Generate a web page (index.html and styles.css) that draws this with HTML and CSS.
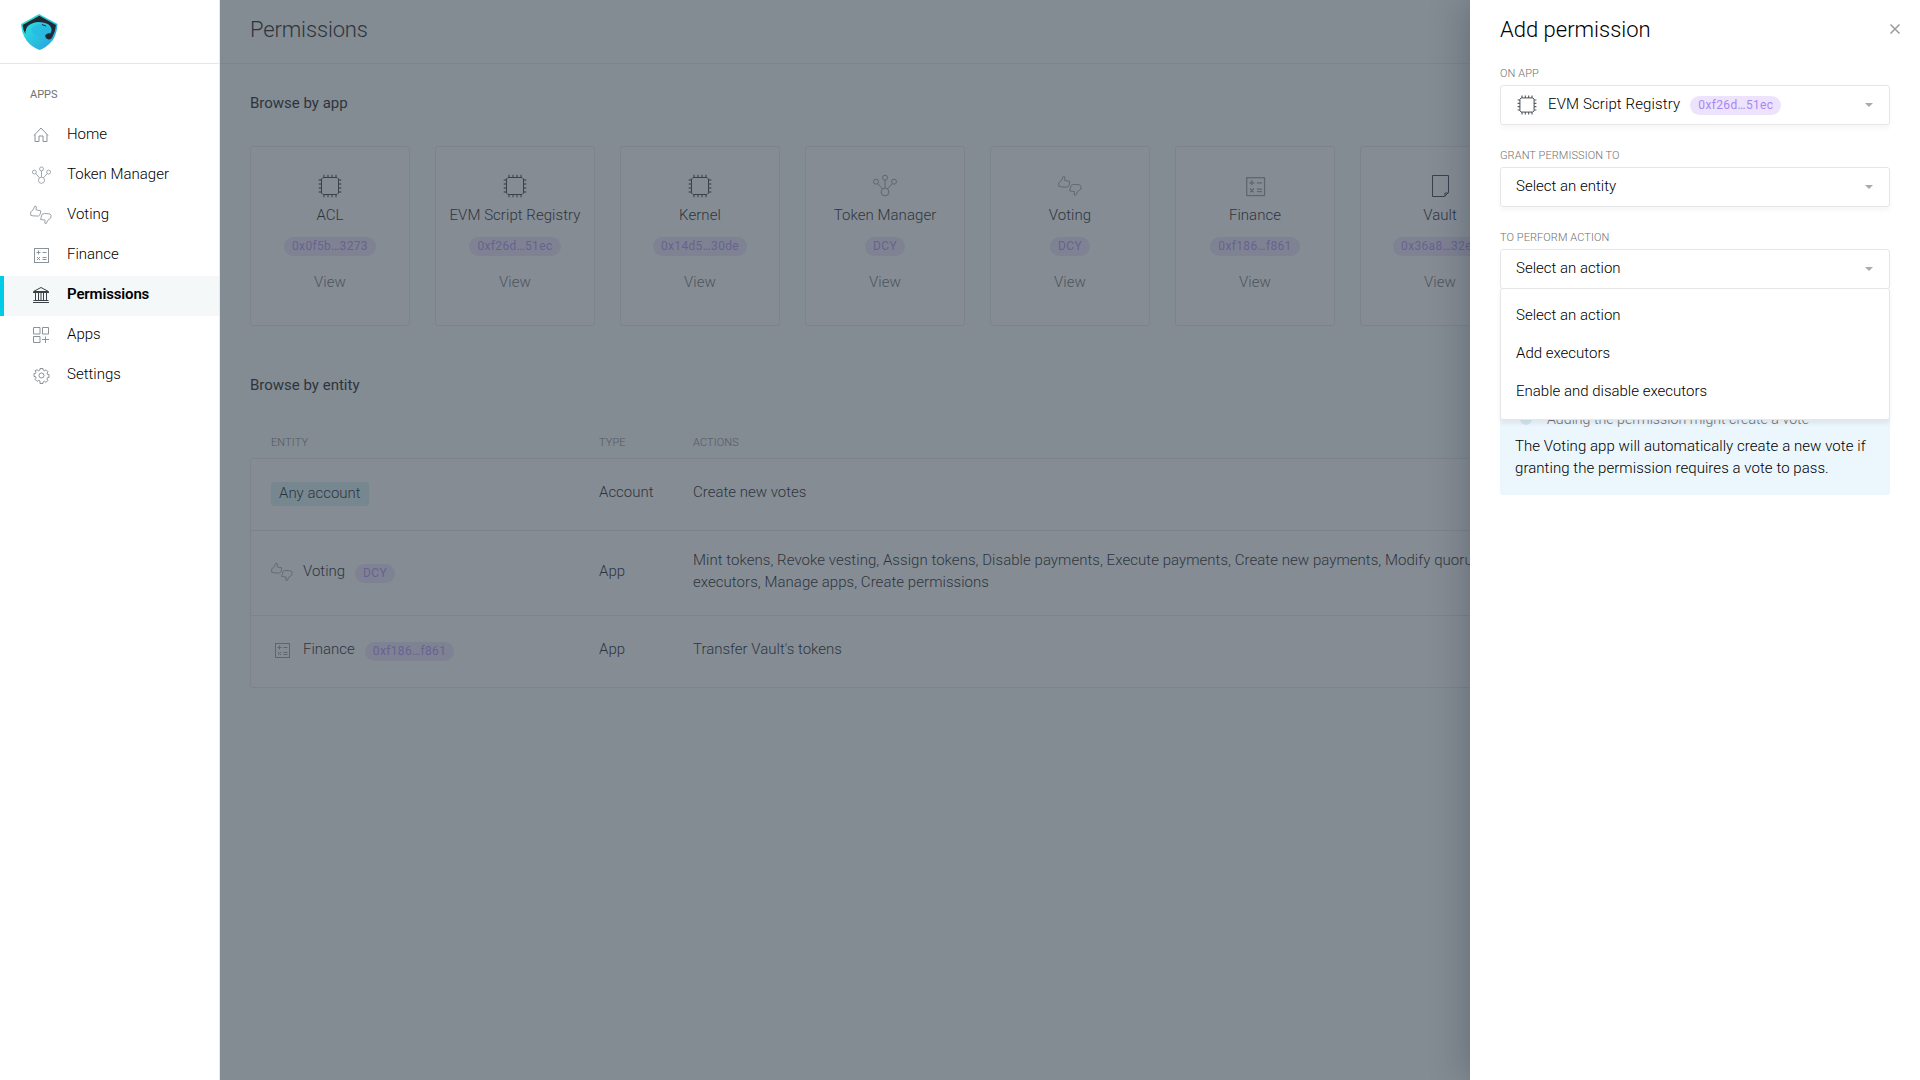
FILE: index.html
```
<!DOCTYPE html>
<html lang="en">
<head>
<meta charset="utf-8">
<title>Permissions</title>
<link rel="stylesheet" href="styles.css">
</head>
<body>
<svg width="0" height="0" class="defs" aria-hidden="true">
  <defs>
    <linearGradient id="shield" x1="0" y1="0" x2="1" y2="1"><stop offset="0" stop-color="#2deee0"/><stop offset="1" stop-color="#259bdf"/></linearGradient>
    <symbol id="i-home" viewBox="0 0 22 22"><path d="M4 11.500 11 4l7 7.500M5 10.500v7h4v-5.500h4v5.500h4v-7" /></symbol>
    <symbol id="i-token" viewBox="0 0 24 24"><circle cx="12" cy="18" r="3.900"/><circle cx="3" cy="7.700" r="2.500"/><circle cx="12" cy="3.700" r="2.500"/><circle cx="21" cy="7.700" r="2.500"/><path d="M12 6.200v7.900M4.700 9.600l4.800 5.300M19.300 9.600l-4.800 5.300"/></symbol>
    <symbol id="i-vote" viewBox="-.5 0 26 24"><path d="M.3 8.300 3 6.200 5.300 1.500l1.700.7-.3 3.700 5.600 1.200-1 4.600-2 1.600-6.300-.3-2.700-.7zM12 17.300 13.700 11.300l2.600-1.100 6.700.5 1.400 1.600-.4 3.400-3.300 2.300-2 4-1.700-.3.300-3.700z"/></symbol>
    <symbol id="i-finance" viewBox="0 0 22 22"><rect x="4.500" y="4.500" width="14" height="14"/><path d="M6.500 8.500h4M8.500 6.500v4M12.500 8.500h4M12.500 13.500h4M12.500 15.500h4M7 13l3 3M10 13l-3 3"/></symbol>
    <symbol id="i-perm" viewBox="0 0 22 22"><path d="M3.500 7.500 11 3.500l7.500 4zM3 8.500h16M3.500 16.500h15M3 18.500h16M5.500 9v7M8.500 9v7M11 9v7M13.500 9v7M16.500 9v7"/></symbol>
    <symbol id="i-apps" viewBox="0 0 22 22"><path d="M3.500 3.500h6.500v6.500h-6.500zM12.500 3.500h6v6.500h-6zM3.500 12.500h6.500v6h-6.500zM15.500 12.500v6.500M12 15.500h7"/></symbol>
    <symbol id="i-gear" viewBox="0 0 22 22"><circle cx="11.500" cy="11.500" r="2.500"/><path d="M10 6V4.500h3V6l1.800.8 1.200-1.100 2.100 2.100-1.100 1.200.6 1.500H19v3h-1.400l-.7 1.600 1.100 1.200-2.100 2.100-1.200-1.100-1.700.7v1.500h-3V17l-1.700-.7-1.200 1.100L5 15.300l1.100-1.200-.7-1.600H4v-3h1.400l.7-1.500L5 6.800l2.100-1.100 1.200 1.100z"/></symbol>
    <symbol id="i-chip" viewBox="0 0 24 24"><path class="pins" d="M6 .7v2.600M10 .7v2.600M14 .7v2.600M18 .7v2.600M6 20.700v2.600M10 20.700v2.600M14 20.700v2.600M18 20.700v2.600M.7 6h2.600M.7 10h2.600M.7 14h2.600M.7 18h2.600M20.700 6h2.600M20.700 10h2.600M20.700 14h2.600M20.700 18h2.600"/><path d="M5 3.500h14l1.500 1.500v14l-1.500 1.500H5L3.500 19V5z"/></symbol>
    <symbol id="i-doc" viewBox="0 0 24 24"><path d="M4.500 1.500h16v17l-4 4h-12zM17 22.500v-3.500h3.500"/></symbol>
  </defs>
</svg>
<div class="app">
  <aside class="sidebar">
    <div class="brand">
      <svg width="38" height="38" viewBox="0 0 38 38"><path d="M19 1 37.500 11 Q37 21 32.500 27.500 26 35 19.500 37 12 34.500 6.500 27.500 1.500 20 1 11z" fill="url(#shield)"/><path d="M2.500 12 19.300 2.800 36 12Q35.500 18 33 22.500 31.500 26.800 28.500 26.500 25 25.500 25.200 22 27 19.500 30 20.500 32.500 18 31 14.500 29.500 10.500 23 9.500 15 7.500 8.500 12.500 5 16 5.500 21 3 17 2.500 12z" fill="#222a31"/><ellipse cx="20.500" cy="17" rx="9" ry="6" fill="#27b8e3" opacity=".7"/><path d="M22 11.500l4 1.500" stroke="#222a31"/></svg>
    </div>
    <h2 class="eyebrow">APPS</h2>
    <nav>
      <a class="nav"><svg class="ic"><use href="#i-home"/></svg><span>Home</span></a>
      <a class="nav"><svg class="ic small"><use href="#i-token"/></svg><span>Token Manager</span></a>
      <a class="nav"><svg class="ic"><use href="#i-vote"/></svg><span>Voting</span></a>
      <a class="nav"><svg class="ic"><use href="#i-finance"/></svg><span>Finance</span></a>
      <a class="nav active"><svg class="ic"><use href="#i-perm"/></svg><span>Permissions</span></a>
      <a class="nav"><svg class="ic"><use href="#i-apps"/></svg><span>Apps</span></a>
      <a class="nav"><svg class="ic"><use href="#i-gear"/></svg><span>Settings</span></a>
    </nav>
  </aside>
  <main class="main">
    <header class="top">Permissions</header>
    <div class="content">
      <h2 class="section">Browse by app</h2>
      <div class="cards">
        <div class="card"><svg class="ic dark"><use href="#i-chip"/></svg><b>ACL</b><span class="badge">0x0f5b…3273</span><i>View</i></div>
        <div class="card"><svg class="ic dark"><use href="#i-chip"/></svg><b>EVM Script Registry</b><span class="badge">0xf26d…51ec</span><i>View</i></div>
        <div class="card"><svg class="ic dark"><use href="#i-chip"/></svg><b>Kernel</b><span class="badge">0x14d5…30de</span><i>View</i></div>
        <div class="card"><svg class="ic"><use href="#i-token"/></svg><b>Token Manager</b><span class="badge">DCY</span><i>View</i></div>
        <div class="card"><svg class="ic"><use href="#i-vote"/></svg><b>Voting</b><span class="badge">DCY</span><i>View</i></div>
        <div class="card"><svg class="ic wide"><use href="#i-finance"/></svg><b>Finance</b><span class="badge">0xf186…f861</span><i>View</i></div>
        <div class="card"><svg class="ic dark"><use href="#i-doc"/></svg><b>Vault</b><span class="badge">0x36a8…32e6</span><i>View</i></div>
      </div>
      <h2 class="section second">Browse by entity</h2>
      <div class="row head"><span>ENTITY</span><span>TYPE</span><span>ACTIONS</span></div>
      <div class="table">
        <div class="row short"><span><em class="tag">Any account</em></span><span>Account</span><span>Create new votes</span></div>
        <div class="row tall"><span class="entity"><svg class="ic"><use href="#i-vote"/></svg>Voting<span class="badge">DCY</span></span><span>App</span><span class="actions">Mint tokens, Revoke vesting, Assign tokens, Disable payments, Execute payments, Create new payments, Modify quorum,<br>executors, Manage apps, Create permissions</span></div>
        <div class="row short"><span class="entity"><svg class="ic"><use href="#i-finance"/></svg>Finance<span class="badge">0xf186…f861</span></span><span>App</span><span>Transfer Vault's tokens</span></div>
      </div>
    </div>
    <div class="overlay"></div>
  </main>
  <aside class="panel">
    <header class="panel-top"><h1>Add permission</h1><svg class="close" width="12" height="12"><path d="M1.500 1.500l9 9M10.500 1.500l-9 9"/></svg></header>
    <div class="field"><label>ON APP</label><div class="select"><svg class="ic dark"><use href="#i-chip"/></svg><span class="value app-name">EVM Script Registry</span><span class="badge">0xf26d…51ec</span><svg class="arrow" width="8" height="4"><path d="M0 0h8L4 4z"/></svg></div></div>
    <div class="field"><label>GRANT PERMISSION TO</label><div class="select"><span class="value">Select an entity</span><svg class="arrow" width="8" height="4"><path d="M0 0h8L4 4z"/></svg></div></div>
    <div class="field"><label>TO PERFORM ACTION</label><div class="select"><span class="value">Select an action</span><svg class="arrow" width="8" height="4"><path d="M0 0h8L4 4z"/></svg>
      <div class="menu"><div>Select an action</div><div>Add executors</div><div>Enable and disable executors</div></div></div></div>
    <div class="info"><div class="info-title"><span class="dot"></span>Adding the permission might create a vote</div><p>The Voting app will automatically create a new vote if<br>granting the permission requires a vote to pass.</p></div>
  </aside>
</div>
</body>
</html>
```
FILE: styles.css
```
* { box-sizing: border-box; }
body { margin: 0; background: #fff; font: 300 15px/22px Roboto, sans-serif; color: #000; overflow: hidden; }
h1, h2, p { margin: 0; font-weight: inherit; font-size: inherit; }
b, i, em { font-weight: inherit; font-style: normal; }
.defs { position: absolute; }
.app { display: flex; width: 1920px; height: 1080px; }
.ic { width: 22px; height: 22px; flex: none; fill: none; stroke: #8a9399; stroke-width: 1; }
.ic.dark { stroke: #222b33; }
.pins { stroke-width: 1.4; opacity: .75; }

.sidebar { width: 220px; flex: none; border-right: 1px solid #e8e8e8; }
.brand { height: 64px; border-bottom: 1px solid #e6e6e6; padding: 13px 20px; }
.brand svg { display: block; }
.eyebrow { padding: 20px 30px 0; height: 52px; font-size: 11px; line-height: 22px; color: #707070; font-weight: 400; }
.nav { display: flex; align-items: center; height: 40px; padding: 0 0 2px 30px; gap: 15px; }
.nav span { padding-bottom: 2px; }
.nav .ic.small { width: 19px; height: 19px; margin: 0 1px 0 2px; }
.nav.active { background: #f5f8f9; box-shadow: inset 4px 0 #00cbe6; font-weight: 600; letter-spacing: -.15px; }
.nav.active .ic { stroke: #3a4247; }

.main { flex: none; width: 1250px; overflow: hidden; position: relative; background: #f9fbfd; }
.overlay { position: absolute; inset: 0; background: rgba(68, 79, 90, .65); }
.top { height: 64px; border-bottom: 1px solid #e8e8e8; padding: 14px 30px; font-size: 22px; line-height: 32px; letter-spacing: -.15px; }
.content { padding: 28px 30px; width: 1700px; }
.section { font-weight: 400; line-height: 22px; }
.cards { display: flex; gap: 25px; margin-top: 32px; }
.card { width: 160px; height: 180px; border: 1px solid #e6e6e6; border-radius: 3px; background: #fff; display: flex; flex-direction: column; align-items: center; padding-top: 27px; }
.card .ic { width: 24px; height: 24px; }
.card .ic.wide { width: 28px; height: 28px; margin: -2px 0; }
.card b { margin-top: 6px; letter-spacing: .05px; }
.card .badge { margin: 11px 0 15px; }
.card i { color: #606060; letter-spacing: .1px; }
.badge { display: inline-block; height: 19px; border-radius: 10px; padding: 0 8px; font-size: 12px; line-height: 19px; letter-spacing: .35px; color: #a987f3; background: #ede3fc; font-weight: 400; }
.second { margin-top: 48px; }
.row { display: grid; grid-template-columns: 328px 94px 1fr; padding-left: 20px; align-items: center; }
.head { height: 62px; padding: 31px 0 0 21px; font-size: 11px; letter-spacing: .1px; color: #707070; }
.table { border: 1px solid #e6e6e6; border-radius: 3px; background: #fff; }
.short { height: 71px; padding-bottom: 5px; }
.tall { height: 86px; padding-bottom: 4px; border-top: 1px solid #e6e6e6; border-bottom: 1px solid #e6e6e6; }
.tag { display: inline-block; background: #d6f0f3; border-radius: 3px; padding: 0 8px 2px; margin-top: 4px; line-height: 22px; }
.entity { display: flex; align-items: center; gap: 10px; }
.entity .ic { margin-top: 2px; }
.entity .badge { margin-top: 4px; }
.actions { letter-spacing: .045px; }

.panel { position: relative; width: 450px; padding: 0 30px; background: #fff; box-shadow: -2px 0 36px rgba(0, 20, 30, .25); }
.panel-top { display: flex; justify-content: space-between; align-items: center; height: 64px; padding-bottom: 6px; margin-right: -11px; }
.panel-top h1 { font-size: 22px; padding-top: 2px; }
.close { fill: none; stroke: #9b9b9b; stroke-width: 1.5; }
.field { height: 82px; }
.field label { display: block; font-size: 11px; line-height: 20px; height: 21px; letter-spacing: .08px; color: #707070; }
.select { position: relative; display: flex; align-items: center; height: 40px; border: 1px solid #e6e6e6; border-radius: 3px; padding: 0 16px 0 15px; box-shadow: 0 4px 4px rgba(0, 0, 0, .03); }
.arrow { margin-left: auto; fill: #aaa; }
.value { padding-bottom: 2px; }
.select .ic { width: 20px; height: 20px; margin: 0 1px; }
.app-name { margin: 0 10px; letter-spacing: .12px; }
.menu { position: absolute; z-index: 2; top: 38px; left: -1px; right: -1px; height: 132px; border: 1px solid #e6e6e6; border-radius: 3px; background: #fff; padding: 8px 15px; box-shadow: 0 4px 4px rgba(0, 0, 0, .06); }
.menu div { height: 38px; line-height: 36px; }
.info { margin-top: 95px; height: 90px; background: #ebf6fd; border-radius: 3px; padding: 3px 15px; }
.info-title { display: flex; height: 27px; color: #707070; font-size: 14.200px; }
.info p { letter-spacing: .06px; }
.dot { width: 12px; height: 12px; border-radius: 50%; background: #d2e6ee; margin: 5px 15px 0 5px; }
```
